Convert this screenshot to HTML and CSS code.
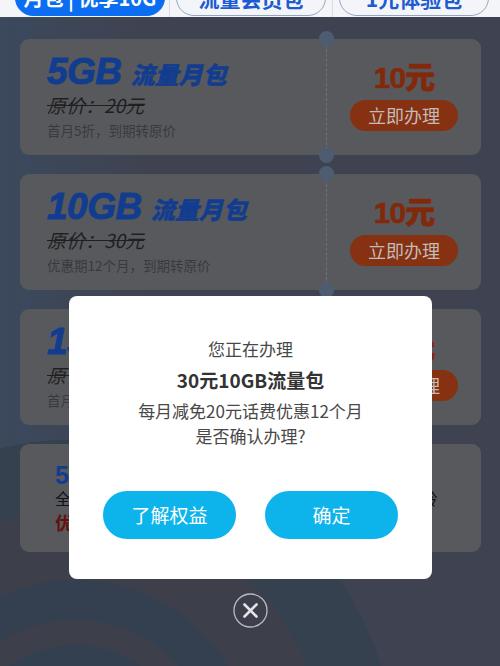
FILE: index.html
```html
<!DOCTYPE html>
<html lang="zh-CN">
<head>
<meta charset="utf-8">
<title>流量包办理</title>
<link rel="stylesheet" href="styles.css">
</head>
<body>
<div class="page">
  <div class="tabs">
    <div class="tab tab-active">月包 | 优享10G</div>
    <span class="sep"></span>
    <div class="tab">流量会员包</div>
    <span class="sep"></span>
    <div class="tab">1元体验包</div>
  </div>

  <div class="list">
    <div class="card">
      <div class="card-main">
        <div class="title"><span class="gb">5GB</span><span class="name">流量月包</span></div>
        <div class="orig">原价：20元</div>
        <div class="note">首月5折，到期转原价</div>
      </div>
      <div class="card-side">
        <div class="price">10元</div>
        <div class="buy">立即办理</div>
      </div>
    </div>

    <div class="card">
      <div class="card-main">
        <div class="title"><span class="gb">10GB</span><span class="name">流量月包</span></div>
        <div class="orig">原价：30元</div>
        <div class="note">优惠期12个月，到期转原价</div>
      </div>
      <div class="card-side">
        <div class="price">10元</div>
        <div class="buy">立即办理</div>
      </div>
    </div>

    <div class="card">
      <div class="card-main">
        <div class="title"><span class="gb">15GB</span><span class="name">流量月包</span></div>
        <div class="orig">原价：40元</div>
        <div class="note">首月5折，到期转原价</div>
      </div>
      <div class="card-side">
        <div class="price">20元</div>
        <div class="buy">立即办理</div>
      </div>
    </div>

    <div class="card card-wide">
      <div class="wide-title">5G视频彩铃会员</div>
      <div class="wide-desc">全国通用流量5GB，另享会员专属权益及高清视频彩铃</div>
      <div class="wide-price">优惠价：5元/月</div>
    </div>
  </div>

  <div class="mask">
    <div class="modal">
      <div class="m-line m-l1">您正在办理</div>
      <div class="m-line m-l2">30元10GB流量包</div>
      <div class="m-line m-l3">每月减免20元话费优惠12个月</div>
      <div class="m-line m-l4">是否确认办理?</div>
      <div class="m-btns">
        <div class="m-btn">了解权益</div>
        <div class="m-btn">确定</div>
      </div>
    </div>
    <div class="close">
      <svg width="35" height="35" viewBox="0 0 35 35">
        <circle cx="17.5" cy="17.5" r="16.5" fill="none" stroke="#b9bbc2" stroke-width="1.3"/>
        <path d="M11.5 11.5 L23.5 23.5 M23.5 11.5 L11.5 23.5" stroke="#e4e4e8" stroke-width="2.6" stroke-linecap="round"/>
      </svg>
    </div>
  </div>
</div>
</body>
</html>
```

FILE: styles.css
```css
html, body {
  margin: 0;
  padding: 0;
}
body {
  width: 500px;
  height: 666px;
  overflow: hidden;
  font-family: "Noto Sans CJK SC", "Noto Sans", sans-serif;
}
.page {
  position: relative;
  width: 500px;
  height: 666px;
  overflow: hidden;
  background-color: #3f4351;
  background-image:
    radial-gradient(circle at 75px 760px,
      #33404f 0 115px,
      #3d3f4b 115px 140px,
      #34404f 140px 180px,
      #3d3f4b 180px 250px,
      #36414f 250px 320px,
      rgba(61, 63, 75, 0) 321px),
    linear-gradient(90deg, #3b495d 0, rgba(59, 73, 93, 0) 140px);
}

/* tabs strip (not dimmed) */
.tabs {
  height: 17px;
  background: #f3f5f9;
  display: flex;
  align-items: flex-end;
  padding-left: 15px;
  overflow: hidden;
}
.tab {
  flex: none;
  width: 150px;
  height: 36px;
  margin-bottom: 1px;
  border-radius: 18px;
  border: 1px solid #94a5bf;
  box-sizing: border-box;
  color: #1c5bd2;
  font-size: 21px;
  font-weight: 700;
  line-height: 34px;
  text-align: center;
  white-space: nowrap;
}
.tab-active {
  background: #0b6ef2;
  border-color: #0b6ef2;
  color: #ffffff;
  font-size: 20px;
}
.sep {
  flex: none;
  width: 1px;
  height: 17px;
  background: #d8dce4;
  margin: 0 6px 0 4px;
}
.sep + .tab + .sep {
  margin: 0 6px 0 6px;
}

/* product list (under the mask, dimmed colours) */
.list {
  padding: 22px 19px 0 20px;
  display: flex;
  flex-direction: column;
  gap: 19px;
}
.card {
  height: 116px;
  border-radius: 9px;
  background: #58595d;
  display: flex;
}
.card-main {
  flex: 1;
  padding: 13px 0 0 27px;
}
.title {
  height: 40px;
  line-height: 40px;
  display: flex;
  align-items: baseline;
  color: #123d8f;
  font-style: italic;
  font-weight: 700;
  white-space: nowrap;
}
.gb {
  font-family: "Liberation Sans", Arial, sans-serif;
  font-size: 37px;
  letter-spacing: -0.5px;
  -webkit-text-stroke: 1px #123d8f;
}
.name {
  font-size: 24px;
  font-weight: 900;
  margin-left: 9px;
  -webkit-text-stroke: 0.4px #123d8f;
}
.orig {
  height: 26px;
  line-height: 26px;
  font-size: 19px;
  font-style: italic;
  color: #1f1f21;
  text-decoration: line-through;
  text-decoration-thickness: 1px;
}
.note {
  margin-top: 2px;
  height: 20px;
  line-height: 20px;
  font-size: 13.5px;
  color: #3a3a3d;
}
.card-side {
  position: relative;
  flex: none;
  width: 155px;
  border-left: 1px dashed #6c7280;
  display: flex;
  flex-direction: column;
  align-items: center;
  padding-top: 21px;
  box-sizing: border-box;
}
.card-side::before,
.card-side::after {
  content: "";
  position: absolute;
  left: -8px;
  width: 15px;
  height: 15px;
  border-radius: 50%;
  background: #4e5c71;
}
.card-side::before { top: -8px; }
.card-side::after { bottom: -8px; }
.price {
  height: 36px;
  line-height: 36px;
  font-size: 30px;
  font-weight: 900;
  color: #82290b;
  font-family: "Liberation Sans", "Noto Sans CJK SC", sans-serif;
  letter-spacing: -1px;
  -webkit-text-stroke: 0.6px #82290b;
}
.buy {
  margin-top: 4px;
  width: 108px;
  height: 31px;
  line-height: 31px;
  border-radius: 16px;
  background: #863111;
  color: #c3bcb9;
  font-size: 18px;
  text-align: center;
}
.card-wide {
  height: 108px;
  flex-direction: column;
  padding: 18px 0 0 35px;
  box-sizing: border-box;
}
.wide-title {
  height: 26px;
  line-height: 26px;
  font-size: 25px;
  font-weight: 700;
  color: #123d8f;
  font-family: "Liberation Sans", "Noto Sans CJK SC", sans-serif;
}
.wide-desc {
  height: 20px;
  line-height: 20px;
  font-size: 16px;
  color: #111113;
  white-space: nowrap;
}
.wide-price {
  margin-top: 2px;
  height: 24px;
  line-height: 24px;
  font-size: 18px;
  font-weight: 700;
  color: #621010;
}

/* modal overlay */
.mask {
  position: absolute;
  left: 0;
  top: 0;
  width: 500px;
  height: 666px;
  display: flex;
  flex-direction: column;
  align-items: center;
  padding-top: 296px;
  box-sizing: border-box;
}
.modal {
  width: 363px;
  height: 283px;
  margin-left: 1px;
  background: #ffffff;
  border-radius: 8px;
  padding-top: 38px;
  box-sizing: border-box;
  text-align: center;
  color: #484848;
}
.m-line {
  white-space: nowrap;
}
.m-l1 { height: 30px; line-height: 30px; font-size: 17px; }
.m-l2 { height: 32px; line-height: 32px; font-size: 19px; font-weight: 700; color: #333333; }
.m-l3 { height: 30px; line-height: 30px; font-size: 17px; }
.m-l4 { height: 20px; line-height: 20px; font-size: 17px; }
.m-btns {
  margin-top: 45px;
  display: flex;
  justify-content: center;
  gap: 29px;
}
.m-btn {
  width: 133px;
  height: 48px;
  line-height: 48px;
  border-radius: 24px;
  background: #0db4eb;
  color: #ffffff;
  font-size: 19px;
}
.close {
  margin-top: 14px;
  width: 35px;
  height: 35px;
  margin-left: 1px;
}
.close svg {
  display: block;
}
```
